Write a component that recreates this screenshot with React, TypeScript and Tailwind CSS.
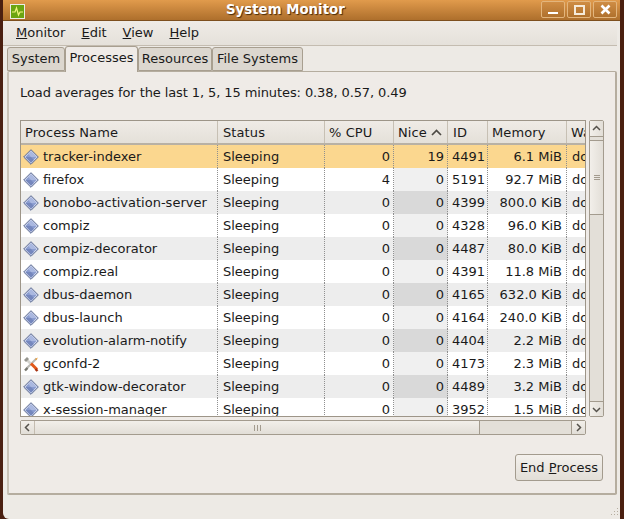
const rows = [
  { name: "tracker-indexer", cpu: "0", nice: "19", id: "4491", mem: "6.1 MiB" },
  { name: "firefox", cpu: "4", nice: "0", id: "5191", mem: "92.7 MiB" },
  { name: "bonobo-activation-server", cpu: "0", nice: "0", id: "4399", mem: "800.0 KiB" },
  { name: "compiz", cpu: "0", nice: "0", id: "4328", mem: "96.0 KiB" },
  { name: "compiz-decorator", cpu: "0", nice: "0", id: "4487", mem: "80.0 KiB" },
  { name: "compiz.real", cpu: "0", nice: "0", id: "4391", mem: "11.8 MiB" },
  { name: "dbus-daemon", cpu: "0", nice: "0", id: "4165", mem: "632.0 KiB" },
  { name: "dbus-launch", cpu: "0", nice: "0", id: "4164", mem: "240.0 KiB" },
  { name: "evolution-alarm-notify", cpu: "0", nice: "0", id: "4404", mem: "2.2 MiB" },
  { name: "gconfd-2", cpu: "0", nice: "0", id: "4173", mem: "2.3 MiB", tools: true },
  { name: "gtk-window-decorator", cpu: "0", nice: "0", id: "4489", mem: "3.2 MiB" },
  { name: "x-session-manager", cpu: "0", nice: "0", id: "3952", mem: "1.5 MiB" },
];

function DiamondIcon() {
  return (
    <svg width="16" height="16" viewBox="0 0 16 16" className="shrink-0">
      <path d="M8 .7 15.3 8 8 15.3.7 8Z" fill="#dfe4f2" stroke="#56658f" strokeWidth="1" />
      <path d="M8 2.3 13.7 8 8 13.7 2.3 8Z" fill="#8b9dd0" />
      <path d="M8 2.3 13.7 8H8L5.2 5.1Z" fill="#aab8e0" />
      <path d="M8 13.7 2.3 8H8L10.8 10.9Z" fill="#7587bd" />
    </svg>
  );
}

function ToolsIcon() {
  return (
    <svg width="16" height="16" viewBox="0 0 16 16" className="shrink-0">
      <path d="M13.5 2.5 3 13" stroke="#b9b9b4" strokeWidth="2.2" />
      <path d="M2 14.5 4.5 12" stroke="#77776f" strokeWidth="2.4" />
      <path d="M3.5 3.5 8 8" stroke="#d4d4cf" strokeWidth="2.6" />
      <path d="M1 4 4 1 6 3 3 6Z" fill="#96968f" />
      <path d="M8 7.5 14 13.5" stroke="#e2591b" strokeWidth="3" />
      <path d="M12.5 13 14.5 15" stroke="#a5300f" strokeWidth="2.4" />
      <path d="M15 1.5 12 3 13.2 4.3Z" fill="#ee9a2c" />
    </svg>
  );
}

function MonitorIcon() {
  return (
    <svg width="15" height="15" viewBox="0 0 15 15">
      <rect x="0.5" y="0.5" width="14" height="14" fill="#6ba512" stroke="#ecece4" />
      <path d="M2 8h3l1.5-4 2 7 1.5-3h3" fill="none" stroke="#f1f57e" strokeWidth="1.2" />
    </svg>
  );
}

function Arrow({ d }: { d: string }) {
  return (
    <svg width="9" height="9" viewBox="0 0 9 9">
      <path d={d} fill="none" stroke="#55524c" strokeWidth="1.5" />
    </svg>
  );
}

function WindowButton({ children }: { children: React.ReactNode }) {
  return (
    <div className="flex h-[17px] w-[24px] items-center justify-center rounded-[2px] border border-[#e3b57c] bg-gradient-to-b from-[#cf8d44] to-[#b0712d]">
      {children}
    </div>
  );
}

function Tab({ label, active, className }: { label: string; active?: boolean; className: string }) {
  if (active) {
    return (
      <div className={`relative z-10 -mb-px flex h-[26px] items-start justify-center rounded-t-[3px] border border-b-0 border-[#a89f90] bg-[#efebe7] pt-[1px] ${className}`}>
        {label}
      </div>
    );
  }
  return (
    <div className={`flex h-[24px] items-center justify-center rounded-t-[3px] border border-[#a89f90] bg-[#dcd7cf] ${className}`}>
      {label}
    </div>
  );
}

function HeaderCell({ label, className }: { label: string; className: string }) {
  return (
    <div className={`flex h-full shrink-0 items-center overflow-hidden whitespace-nowrap pt-[1px] ${className}`}>
      {label}
    </div>
  );
}

export default function App() {
  return (
    <div className="relative flex h-[519px] w-[624px] flex-col overflow-hidden bg-[#4a1f10] pl-[3px] pr-[4px] text-[13px] text-[#1a1a1a] [font-family:'DejaVu_Sans',sans-serif]">
      {/* titlebar */}
      <div className="relative flex h-[21px] shrink-0 items-start justify-between border-b border-[#7d4f1e] bg-gradient-to-b from-[#e19b4c] to-[#ae6f2c] pl-[7px] pr-[3px] pt-[1px]">
        <div className="pt-[3px]">
          <MonitorIcon />
        </div>
        <div className="absolute left-[223px] top-[0px] text-[13.33px] font-bold text-white [text-shadow:1px_1px_1px_#4a2a08]">
          System Monitor
        </div>
        <div className="flex gap-[2px]">
          <WindowButton>
            <div className="mt-[6px] h-[2px] w-[10px] bg-white" />
          </WindowButton>
          <WindowButton>
            <div className="h-[10px] w-[11px] border-2 border-[#f5ead9]" />
          </WindowButton>
          <WindowButton>
            <svg width="11" height="11" viewBox="0 0 11 11">
              <path d="M1.5 1.5 9.5 9.5M9.5 1.5 1.5 9.5" stroke="white" strokeWidth="2.6" />
            </svg>
          </WindowButton>
        </div>
      </div>

      <div className="flex min-h-0 flex-1 flex-col rounded-bl-[6px] bg-[#edeae5]">
        {/* menubar */}
        <div className="mr-[3px] flex h-[25px] shrink-0 items-center gap-[16px] border-b border-[#c4bcb0] bg-gradient-to-b from-[#efebe6] to-[#e5e1da] pl-[13px]">
          <span><u>M</u>onitor</span>
          <span><u>E</u>dit</span>
          <span><u>V</u>iew</span>
          <span><u>H</u>elp</span>
        </div>

        {/* tabs */}
        <div className="flex h-[25px] shrink-0 items-end pl-[4px]">
          <Tab label="System" className="w-[58px]" />
          <Tab label="Processes" active className="w-[73px]" />
          <Tab label="Resources" className="w-[74px]" />
          <Tab label="File Systems" className="w-[91px]" />
        </div>

        {/* notebook page */}
        <div className="ml-[4px] mr-[3px] flex h-[424px] shrink-0 flex-col rounded-[2px] border-2 border-t border-[#b5ad9f] border-l-[#c9c2b6] bg-[#efebe7] pl-[11px] pr-[12px]">
          <div className="mt-[11px] h-[20px] leading-[20px] tracking-[-0.1px]">
            Load averages for the last 1, 5, 15 minutes: 0.38, 0.57, 0.49
          </div>

          <div className="mt-[17px] flex h-[297px] gap-[3px]">
            {/* process table */}
            <div className="w-[566px] shrink-0 overflow-hidden border border-[#9d9588] bg-white">
              <div className="flex h-[24px] border-b-2 border-[#b8b1a5] bg-gradient-to-b from-[#efebe6] to-[#e4e0d9] tracking-[0.1px]">
                <HeaderCell label="Process Name" className="w-[197px] border-r border-[#c7c0b4] pl-[4px]" />
                <HeaderCell label="Status" className="w-[107px] border-r border-[#c7c0b4] pl-[5px]" />
                <HeaderCell label="% CPU" className="w-[69px] border-r border-[#c7c0b4] pl-[4px]" />
                <div className="flex h-full w-[54px] shrink-0 items-center gap-[4px] border-r border-[#c7c0b4] pl-[4px] pt-[1px]">
                  Nice
                  <svg width="11" height="7" viewBox="0 0 11 7">
                    <path d="M1 6 5.5 1.5 10 6" fill="none" stroke="#4d4a44" strokeWidth="1.7" />
                  </svg>
                </div>
                <HeaderCell label="ID" className="w-[40px] border-r border-[#c7c0b4] pl-[5px]" />
                <HeaderCell label="Memory" className="w-[79px] border-r border-[#c7c0b4] pl-[4px]" />
                <HeaderCell label="Waiting Channel" className="w-[22px] pl-[4px]" />
              </div>

              {rows.map((row, i) => {
                const selected = i === 0;
                const rowBg = selected ? "bg-[#fbd78f]" : i % 2 === 0 ? "bg-[#ededed]" : "bg-white";
                const niceBg = selected ? "bg-[#fbd78f]" : i % 2 === 0 ? "bg-[#d9d9d9]" : "bg-[#f0f0f0]";
                return (
                  <div key={row.id} className={`flex h-[23px] items-center whitespace-nowrap ${rowBg}`}>
                    <div className="flex h-full w-[197px] shrink-0 items-center gap-[4px] border-r border-dotted border-[#8f8f8f] pl-[2px]">
                      {row.tools ? <ToolsIcon /> : <DiamondIcon />}
                      {row.name}
                    </div>
                    <div className="flex h-full w-[107px] shrink-0 items-center border-r border-dotted border-[#8f8f8f] pl-[5px]">
                      Sleeping
                    </div>
                    <div className="flex h-full w-[69px] shrink-0 items-center justify-end border-r border-dotted border-[#8f8f8f] pr-[3px]">
                      {row.cpu}
                    </div>
                    <div className={`flex h-full w-[54px] shrink-0 items-center justify-end border-r border-dotted border-[#8f8f8f] pr-[3px] ${niceBg}`}>
                      {row.nice}
                    </div>
                    <div className="flex h-full w-[40px] shrink-0 items-center border-r border-dotted border-[#8f8f8f] pl-[4px]">
                      {row.id}
                    </div>
                    <div className="flex h-full w-[79px] shrink-0 items-center justify-end border-r border-dotted border-[#8f8f8f] pr-[4px]">
                      {row.mem}
                    </div>
                    <div className="h-full w-[20px] shrink-0 overflow-hidden pl-[5px] leading-[23px]">do_wait</div>
                  </div>
                );
              })}
            </div>

            {/* vertical scrollbar */}
            <div className="flex w-[15px] shrink-0 flex-col rounded-[2px] border border-[#a39b8e] bg-[#e3dfd8]">
              <div className="flex h-[16px] shrink-0 items-center justify-center border-b border-[#a39b8e] bg-gradient-to-r from-[#f2efea] to-[#e2ded7]">
                <Arrow d="M1 6 4.5 2.5 8 6" />
              </div>
              <div className="mt-[3px] flex h-[75px] shrink-0 flex-col items-center justify-center gap-[1px] border-y border-[#a39b8e] bg-gradient-to-r from-[#f2efea] to-[#e2ded7]">
                <div className="h-px w-[6px] bg-[#a39b8e]" />
                <div className="h-px w-[6px] bg-[#a39b8e]" />
                <div className="h-px w-[6px] bg-[#a39b8e]" />
              </div>
              <div className="flex-1" />
              <div className="flex h-[15px] shrink-0 items-center justify-center border-t border-[#a39b8e] bg-gradient-to-r from-[#f2efea] to-[#e2ded7]">
                <Arrow d="M1 3 4.5 6.5 8 3" />
              </div>
            </div>
          </div>

          {/* horizontal scrollbar */}
          <div className="mt-[3px] flex h-[15px] w-[566px] shrink-0 rounded-[2px] border border-[#a39b8e] bg-[#e3dfd8]">
            <div className="flex w-[14px] shrink-0 items-center justify-center border-r border-[#c4bcb0] bg-gradient-to-b from-[#f2efea] to-[#e2ded7]">
              <Arrow d="M6 1 2.5 4.5 6 8" />
            </div>
            <div className="flex w-[445px] shrink-0 items-center justify-center gap-[1px] border-r border-[#a39b8e] bg-gradient-to-b from-[#f2efea] to-[#e2ded7]">
              <div className="h-[6px] w-px bg-[#a39b8e]" />
              <div className="ml-px h-[6px] w-px bg-[#a39b8e]" />
              <div className="ml-px h-[6px] w-px bg-[#a39b8e]" />
            </div>
            <div className="flex-1" />
            <div className="flex w-[14px] shrink-0 items-center justify-center border-l border-[#a39b8e] bg-gradient-to-b from-[#f2efea] to-[#e2ded7]">
              <Arrow d="M3 1 6.5 4.5 3 8" />
            </div>
          </div>

          <div className="mt-[19px] flex justify-end">
            <div className="flex h-[27px] w-[88px] items-center justify-center rounded-[3px] border border-[#a39b8e] bg-gradient-to-b from-[#f4f1ed] to-[#e2ded7]">
              <span>End <u>P</u>rocess</span>
            </div>
          </div>
        </div>
      </div>

      {/* resize grip */}
      <div className="absolute bottom-[4px] right-[6px] grid grid-cols-3 gap-[2px]">
        {[0, 1, 2, 3, 4, 5, 6, 7, 8].map((n) => (
          <div key={n} className={n === 0 || n === 1 || n === 3 ? "size-px" : "size-px bg-[#b5ad9f]"} />
        ))}
      </div>
    </div>
  );
}
